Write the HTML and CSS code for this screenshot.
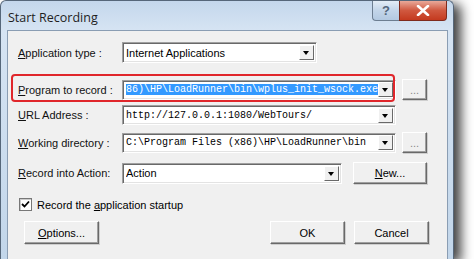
FILE: index.html
```html
<!DOCTYPE html>
<html lang="en">
<head>
    <meta charset="UTF-8">
    <meta name="viewport" content="width=device-width, initial-scale=1.0">
    <title>Start Recording</title>
    <link rel="stylesheet" href="styles.css">
</head>

<body>
    <div class="window">
        <div class="titlebar">
            <span class="title">Start Recording</span>
            <div class="caption">
                <span class="cap help">?</span>
                <span class="cap close">
                    <svg width="14" height="11" viewBox="0 0 14 11"><path d="M2 1 L12 10 M12 1 L2 10" stroke="#fff" stroke-width="2.6" stroke-linecap="round"/></svg>
                </span>
            </div>
        </div>

        <div class="client">
            <div class="row r1">
                <label class="lbl"><u>A</u>pplication type :</label>
                <div class="field select w-app">
                    <span class="val">Internet Applications</span>
                    <span class="drop"></span>
                </div>
            </div>

            <div class="row r2">
                <label class="lbl"><u>P</u>rogram to record :</label>
                <div class="field w-full mono">
                    <span class="val"><span class="hl">86)\HP\LoadRunner\bin\wplus_init_wsock.exe</span></span>
                    <span class="drop"></span>
                </div>
                <button class="btn dots">...</button>
                <div class="mark"></div>
            </div>

            <div class="row r3">
                <label class="lbl"><u>U</u>RL Address :</label>
                <div class="field w-full mono">
                    <span class="val">http://127.0.0.1:1080/WebTours/</span>
                    <span class="drop"></span>
                </div>
            </div>

            <div class="row r4">
                <label class="lbl"><u>W</u>orking directory :</label>
                <div class="field w-full mono">
                    <span class="val">C:\Program Files (x86)\HP\LoadRunner\bin</span>
                    <span class="drop"></span>
                </div>
                <button class="btn dots">...</button>
            </div>

            <div class="row r5">
                <label class="lbl"><u>R</u>ecord into Action:</label>
                <div class="field select w-action">
                    <span class="val">Action</span>
                    <span class="drop"></span>
                </div>
                <button class="btn new"><u>N</u>ew...</button>
            </div>

            <div class="row check-row">
                <span class="checkbox">
                    <svg width="9" height="9" viewBox="0 0 9 9"><path d="M1 4 L3.5 6.5 L8 1.5" fill="none" stroke="#000" stroke-width="1.8"/></svg>
                </span>
                <span class="check-label">Record the <u>a</u>pplication startup</span>
            </div>

            <div class="row buttons">
                <button class="btn wide"><u>O</u>ptions...</button>
                <div class="spacer"></div>
                <button class="btn wide">OK</button>
                <button class="btn wide">Cancel</button>
            </div>
        </div>
    </div>
</body>
</html>
```

FILE: styles.css
```css
body {
    margin: 0;
    height: 259px;
    background: #fff;
    font-family: "Liberation Sans", Arial, sans-serif;
    font-size: 11px;
    color: #000;
    overflow: hidden;
}

.window {
    width: 441px;
    height: 258px;
    box-sizing: content-box;
    padding: 0 5px 0 6px;
    background: linear-gradient(to bottom, #c4d7ec, #d6e4f3 30px, #c2d6ea);
    border: 1px solid #56677a;
    border-bottom: none;
    border-radius: 6px 6px 0 0;
    box-shadow: 7px 4px 12px rgba(0, 0, 0, 0.75);
    display: flex;
    flex-direction: column;
}

.titlebar {
    height: 29px;
    flex: none;
    display: flex;
    align-items: flex-start;
}

.title {
    margin: 8px 0 0 1px;
    font-family: "Open Sans", "Liberation Sans", sans-serif;
    font-size: 12.5px;
    color: #1e1e1e;
}

.caption {
    margin-left: auto;
    margin-right: 1px;
    display: flex;
}

.cap {
    height: 19px;
    display: flex;
    align-items: center;
    justify-content: center;
    border: 1px solid #6d7e91;
    border-top: none;
}

.help {
    width: 26px;
    border-radius: 0 0 0 4px;
    background: linear-gradient(to bottom, #e3ecf6, #c3d5e9 50%, #b3c9e1);
    color: #53667b;
    font-weight: bold;
    font-size: 13px;
    border-right: none;
}

.close {
    width: 46px;
    border-radius: 0 0 4px 0;
    background: linear-gradient(to bottom, #e9a99a, #d0583f 50%, #c43a1f);
    border-color: #7e2a1c;
}

.client {
    flex: 1;
    background: #f0f0f0;
    border: 1px solid #8a9db3;
    border-bottom: none;
    padding: 0 18px 0 10px;
}

.row {
    display: flex;
    align-items: center;
    position: relative;
}

.r1 { margin-top: 11px; }
.r2 { margin-top: 16px; }
.r3 { margin-top: 5px; }
.r4 { margin-top: 7px; }
.r5 { margin-top: 9px; }
.check-row { margin-top: 14px; }
.buttons { margin-top: 10px; }

.lbl {
    width: 104px;
    flex: none;
    color: #111;
}

.field {
    height: 20px;
    box-sizing: border-box;
    background: #fff;
    border: 1px solid;
    border-color: #a0a0a0 #fff #fff #a0a0a0;
    box-shadow: inset 1px 1px 0 #696969, inset -1px -1px 0 #e3e3e3;
    display: flex;
    align-items: center;
    padding: 0 2px 0 3px;
    overflow: hidden;
}

.select {
    height: 21px;
}

.w-app { width: 195px; }
.w-full { width: 274px; }
.w-action { width: 220px; }

.val {
    flex: 1;
    white-space: nowrap;
    overflow: hidden;
}

.mono .val {
    font-family: "Liberation Mono", "Courier New", monospace;
    font-size: 10px;
}

.hl {
    background: #3399ff;
    color: #fff;
}

.drop {
    width: 15px;
    height: 15px;
    flex: none;
    box-sizing: border-box;
    background: #f0f0f0;
    border: 1px solid;
    border-color: #fff #696969 #696969 #fff;
    position: relative;
}

.drop::after {
    content: "";
    position: absolute;
    left: 3px;
    top: 5px;
    border-left: 3.5px solid transparent;
    border-right: 3.5px solid transparent;
    border-top: 4px solid #000;
}

.btn {
    font-family: "Liberation Sans", Arial, sans-serif;
    font-size: 11px;
    color: #000;
    background: #f0f0f0;
    border: 1px solid;
    border-color: #fff #696969 #696969 #fff;
    box-shadow: inset -1px -1px 0 #a0a0a0, 1px 1px 0 #cfcfcf;
    padding: 0;
    height: 22px;
}

.dots {
    width: 25px;
    margin-left: 6px;
    color: #888;
    height: 21px;
}

.new {
    width: 74px;
    margin-left: 11px;
}

.wide {
    width: 75px;
    height: 23px;
}

.buttons .wide + .wide {
    margin-left: 9px;
}

.spacer {
    flex: 1;
}

.buttons {
    padding-left: 6px;
}

.mark {
    position: absolute;
    left: -7px;
    top: -5px;
    width: 380px;
    height: 24px;
    border: 2px solid #e0262b;
    border-radius: 4px;
    pointer-events: none;
}

.check-row {
    padding-left: 1px;
}

.checkbox {
    width: 13px;
    height: 13px;
    box-sizing: border-box;
    background: #fff;
    border: 1px solid #777;
    box-shadow: inset 1px 1px 0 #ccc;
    display: flex;
    align-items: center;
    justify-content: center;
}

.check-label {
    margin-left: 5px;
}
```
